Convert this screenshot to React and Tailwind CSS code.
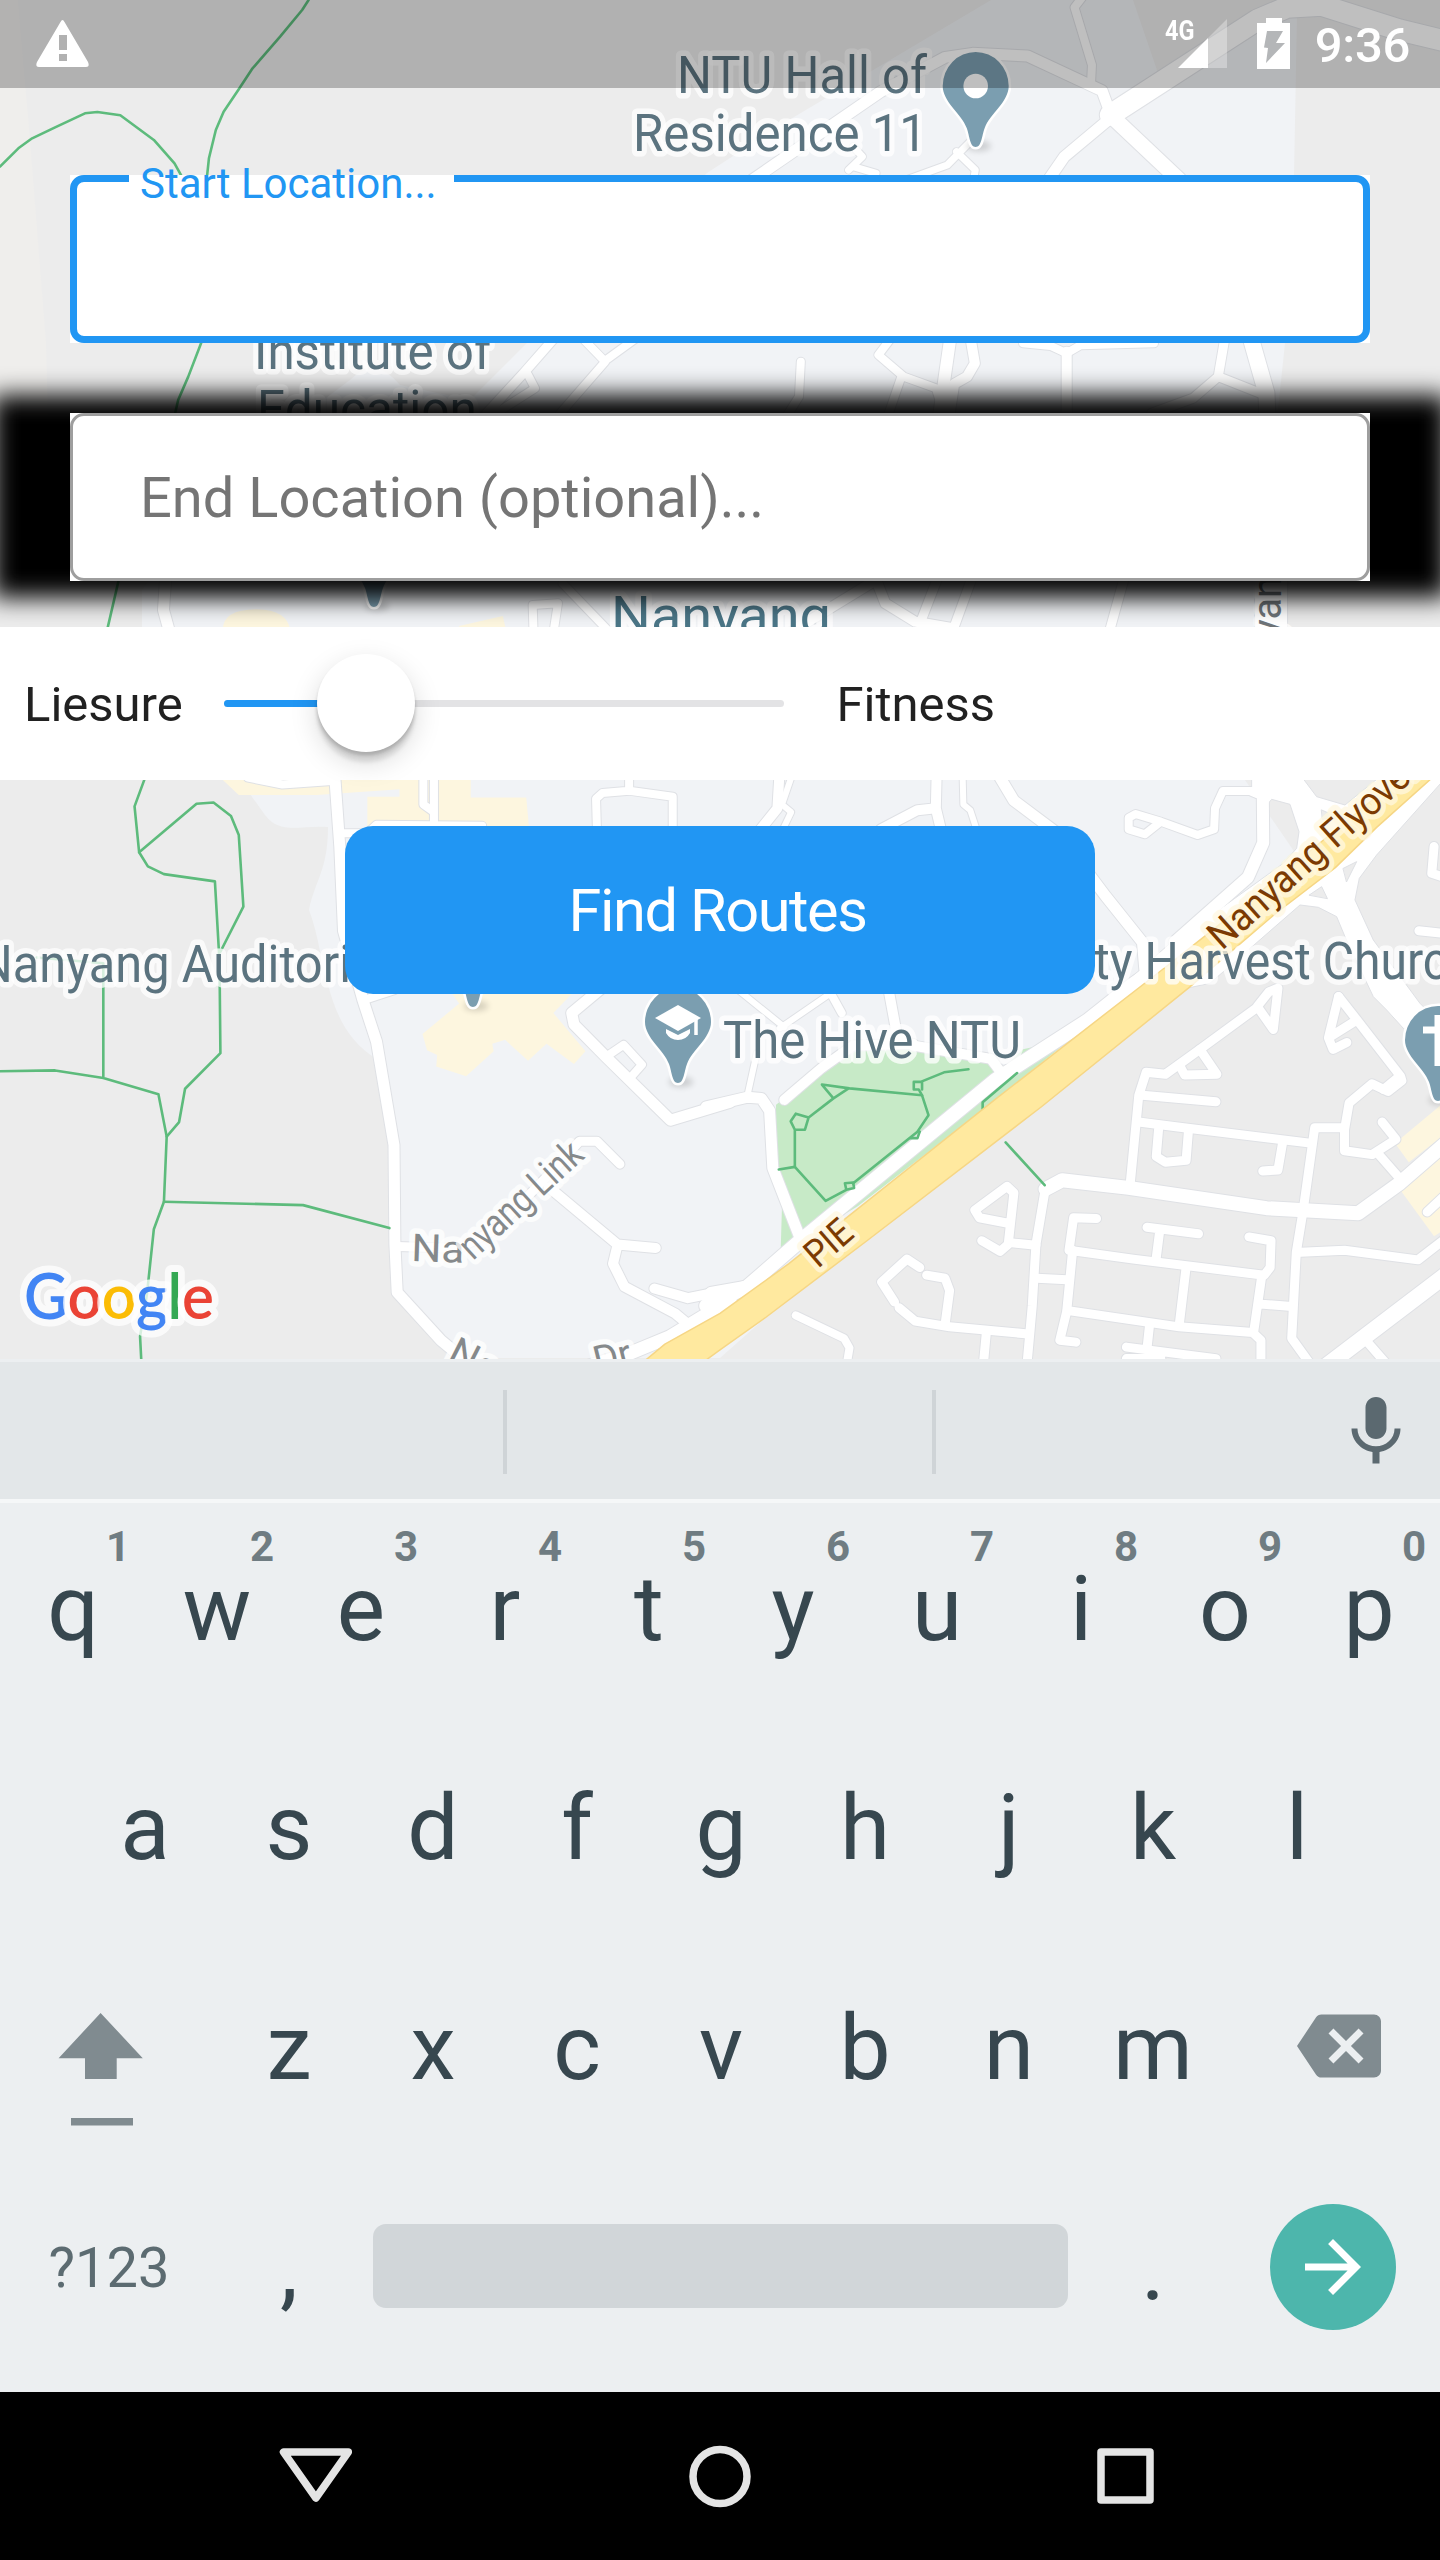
import React from "react";
import { MdMic, MdArrowForward } from "react-icons/md";

/* ---------- map data: each tile keeps its own local coordinate grid ---------- */

const TILES = [
  {
    matrix: "matrix(.4592 0 0 .3333 0 0)",
    fills: [],
    roads: [
      [9, "M1210 1010L1140 1120L1060 1240L1000 1340"],
      [8, "M1150 1125L1165 1165L1080 1240M1265 1010L1318 1085L1220 1240L1180 1340M1390 1010L1315 1085"],
    ],
    paths: [
      "M0 500L40 445L70 415L120 382L185 340L212 336L262 346L335 420L380 490L400 540",
      "M672 0L658 30L610 110L550 205L520 268L487 335L470 390L455 475L450 540",
      "M442 1015L410 1130L388 1200L378 1260L258 1743L235 1880L225 1940",
    ],
  },
  {
    matrix: "matrix(.4592 0 0 .3333 720 0)",
    fills: [],
    roads: [
      [8, "M790 -10L772 22L810 195L808 250"],
      [21, "M1600 130L1480 90L1310 16L1235 22L1170 60L850 345"],
      [15, "M850 345L1000 540"],
      [11, "M850 355L750 470L715 540M850 340L832 272L670 168L550 160L490 172L350 275L70 540"],
      [7, "M545 425L495 495L405 540M515 455L556 510L552 540M280 510L310 470L290 440M290 500L340 520"],
      [8, "M345 1065L400 1130L470 1165L478 1200M375 1010L345 1065M395 1130L360 1270"],
      [12, "M502 1010L478 1240"],
      [10, "M545 1010L555 1090L538 1130L510 1152L500 1240M755 1055L755 1250"],
      [8, "M176 1085L172 1190L140 1260M660 1030L720 1038L755 1060L785 1036L945 1030"],
      [9, "M1100 1010L1085 1130L1030 1195L940 1240M1085 1130L1195 1190"],
      [16, "M1155 1010L1190 1180L1192 1250"],
    ],
    paths: [],
  },
  {
    matrix: "matrix(.4592 0 0 .3333 0 370)",
    fills: ["M485 780Q485 718 560 718Q625 720 632 780Z", "M1000 780V768L1095 738L1102 780Z"],
    roads: [
      [11, "M362 600L356 720L372 800"],
      [8, "M1162 790L1160 705L1215 700L1205 790M1225 640L1330 790"],
    ],
    paths: [],
  },
  {
    matrix: "matrix(.4592 0 0 .3333 720 370)",
    fills: [],
    roads: [
      [9, "M555 600L505 790M475 620L440 745M885 600L845 800"],
      [10, "M150 790L340 630L360 700L425 755L510 775"],
      [32, "M1200 600L1200 800"],
    ],
    paths: [],
  },
  {
    matrix: "matrix(.4592 0 0 .3827 0 770)",
    fills: [
      "M480 20L520 65H690L870 50V70H800V150H1152L1146 72H1025V20Z",
      "M985 585L1000 610L920 690L930 732L952 745L950 775L1015 800L1075 735L1072 715L1100 705L1150 760L1190 715L1250 768L1275 735L1205 635L1245 585Z",
    ],
    roads: [
      [11, "M728 0L740 200L748 420L790 600L820 710L858 980L860 1240L865 1365L960 1490L1030 1560"],
      [8, "M740 165H800L820 143L1050 146M795 600L860 575M540 20L615 38L730 28"],
      [8, "M922 0V90L945 110V170M945 0V110"],
      [8, "M1300 160L1298 75L1312 60L1370 54L1465 70V160M1370 0V54"],
      [11, "M1310 570L1245 635L1250 665L1320 750L1460 915L1590 868"],
      [8, "M1325 745L1358 718L1398 770L1372 805"],
      [9, "M865 1245L1000 1250L1080 1200L1225 1020L1262 970H1300L1350 1030"],
      [10, "M1195 1090L1345 1240L1428 1249M1345 1240L1335 1290L1360 1350L1470 1420L1500 1450"],
      [10, "M1425 1355L1498 1380L1590 1358"],
      [13, "M1250 1570L1370 1525L1460 1480L1590 1385"],
    ],
    paths: [
      "M316 20L293 95L303 215L322 252L357 272L468 291L478 500L480 740L403 833L390 920L363 958L357 1128L335 1200L320 1370L305 1480L308 1550",
      "M303 215L428 88L465 85L503 120L520 170L530 357L480 475",
      "M0 787L120 785L225 805L345 847L363 958M225 805V505L80 490",
      "M357 1128L660 1137L848 1197",
    ],
  },
  {
    matrix: "matrix(.4592 0 0 .3827 720 770)",
    fills: ["M1580 865L1470 975L1500 1025L1580 950Z", "M1480 1095L1555 1218L1580 1200V1000Z"],
    roads: [
      [11, "M600 0L640 80L740 170L840 330L920 450L925 520"],
      [10, "M472 0L470 100L482 160M350 155L430 105L470 100M130 0L125 100L85 160"],
      [6, "M155 20L135 90L155 110L135 160M528 0L530 90L545 105L560 160"],
      [8, "M1170 55L1095 55L1078 100L1076 155L1040 170L960 135L905 115L890 125V155L925 168L960 135"],
      [10, "M365 560L385 690L420 720L590 755L615 795"],
      [6, "M40 575L140 672M130 675L245 580M80 740L58 860"],
      [8, "M235 570L265 635"],
      [10, "M140 862L220 780L290 720L420 715"],
      [11, "M-30 880L60 855L90 858L108 890L115 1040L175 1225M-20 1365L60 1348"],
      [12, "M1182 60L1183 190L1150 280L990 450"],
      [14, "M-30 1400L60 1350L170 1235L600 810L690 740L800 655L900 560L960 510"],
      [9, "M1195 580L1170 618L1205 678L1215 570L1195 580M1170 620L1045 730L970 795L928 790L912 850L893 1085"],
      [9, "M1045 730L1082 795L1012 797L1000 770M920 850L1080 867M912 920L1010 935L1285 975"],
      [9, "M955 940L950 1010L970 1025L1015 1020L1020 945M1225 975L1215 1045L1182 1048"],
      [9, "M1347 592L1385 650L1482 800L1485 812L1455 840L1420 820L1370 870L1360 940V995L1420 1005L1472 965L1442 920"],
      [9, "M1347 592L1325 700L1335 730L1365 712M1385 655L1325 700M1360 935L1295 935L1270 1150M1435 1005L1475 1060M1480 800L1445 835"],
      [14, "M709 1095L745 1072L890 1092L1190 1145L1390 1158L1480 1080L1590 965"],
      [9, "M709 1090L688 1240L680 1400L668 1560M1270 1150L1255 1260L1245 1485L1290 1560M1265 1260L1360 1255L1520 1280L1590 1215"],
      [16, "M1290 1585L1580 1320"],
      [9, "M1410 1495L1450 1550M820 1172L770 1170L760 1255L900 1278L1185 1320L1198 1300L1200 1230L1152 1220"],
      [9, "M768 1255L755 1415L740 1490L775 1495M755 1412L1000 1455L1160 1470L1178 1490V1560M1180 1320L1162 1470M1172 1395L1245 1402"],
      [9, "M1015 1300L1000 1450M930 1195L1042 1212M958 1200L950 1275M690 1328L755 1332M688 1242L632 1235L610 1258L570 1230"],
      [9, "M628 1235L640 1105L625 1088L555 1150L565 1170L630 1185M435 1300L407 1278L352 1338L380 1390M390 1405L425 1440L500 1455L665 1473"],
      [9, "M450 1320L490 1328L500 1360L490 1450M580 1470L573 1560M935 1455L930 1510M885 1508L1080 1538M885 1538H960"],
      [9, "M1555 200L1550 270L1600 290M1522 420L1600 430M1540 1155L1580 1110"],
      [8, "M165 1425L270 1485L282 1510L275 1560"],
    ],
    paths: [],
  },
];

/* interchange around the flyover, holes cut with the even-odd rule */
const INTERCHANGE = [
  "M445 75L455 62V20H605L650 80L735 105L840 20H1000L520 420L260 655L0 780V705L210 520L370 410L550 280L590 235L597 185L570 103L515 88L505 100ZM665 120L710 140L668 148Z",
  "M1040 20L830 255L778 325L765 390L820 510L960 700L1040 780V860L910 775L860 720L820 680L735 500L710 440L655 412L600 405L330 640L260 655L430 500L690 290L960 20ZM730 295L770 275L740 335ZM628 375L665 350L682 385Z",
];

const PARK_PATHS = [
  "M128 1044L163 1037L230 1126L275 1097L272 1080L290 1078L292 1092L275 1097",
  "M290 1080L430 945L454 902L440 850L282 832L222 822L247 858L280 832M247 858L193 908L185 940H163L154 918L165 898L193 908M163 940V1037",
  "M440 850L433 835H422V815H440V835M437 815L488 790L541 782M572 886V868L647 792M622 973L707 1085M415 962H430L435 945",
];

const PIN = "M0 61C-6 61-6 50-9 42C-14 28-33 16-33 0A33 34 0 0 1 33 0C33 16 14 28 9 42C6 50 6 61 0 61Z";

function Pin({ x, y, children }) {
  return (
    <g transform={`translate(${x} ${y})`}>
      <ellipse className="blur-[3px]" cx="3" cy="60" rx="12" ry="5" fill="#000" opacity=".16" />
      <path d={PIN} fill="#7b9eb0" stroke="#fff" strokeWidth="5" paintOrder="stroke" />
      {children}
    </g>
  );
}

function Label({ x, y, w, size = 51, rotate = 0, fill = "#5b737f", halo = "#fff", children }) {
  return (
    <text
      transform={`translate(${x} ${y}) rotate(${rotate})`}
      fontSize={size}
      textLength={w}
      lengthAdjust="spacingAndGlyphs"
      fill={fill}
      stroke={halo}
      strokeOpacity=".75"
      strokeWidth="11"
      strokeLinejoin="round"
      paintOrder="stroke"
    >
      {children}
    </text>
  );
}

function MapCanvas() {
  return (
    <svg className="absolute inset-0 font-[Roboto,sans-serif]" width="1440" height="1359" viewBox="0 0 1440 1359">
      <rect width="1440" height="1359" fill="#ececec" />
      <path d="M0 0H18L30 140L46 343L48 420H0Z" fill="#efeeec" />
      {/* campus ground */}
      <path
        d="M991 0H1133L1158 73L1240 20L1297 15L1294 175L1285 343L1258 600L1245 780L1300 860L1090 1030L720 1358H450L395 1290L394 1140L378 1060C345 1040 335 1010 328 985C320 960 320 940 309 910C315 880 328 870 328 827C300 825 280 835 265 815L240 780L142 640V590L230 470L350 380Q375 355 400 385L470 400L530 340L707 173L784 123Z"
        fill="#f1f3f6"
      />
      <path
        transform="matrix(.4592 0 0 .3827 720 770)"
        d="M122 875L230 775L330 715L560 745L590 760L603 795L660 730L755 705V712L560 900L300 1140L132 1260L135 1140L122 1040Z"
        fill="#c7eac7"
      />
      <g strokeLinejoin="round" strokeLinecap="round" fill="none">
        {TILES.map((t) => (
          <g key={t.matrix} transform={t.matrix}>
            {t.fills.map((d) => (
              <path key={d} d={d} fill="#fdf6df" />
            ))}
            {t.roads.map(([w, d]) => (
              <path key={d} d={d} stroke="#dfe1e5" strokeWidth={w + 2} vectorEffect="non-scaling-stroke" />
            ))}
          </g>
        ))}
        <g transform="matrix(.3333 0 0 .3333 1100 770)">
          {INTERCHANGE.map((d) => (
            <path key={d} d={d} fill="#fff" fillRule="evenodd" stroke="#dfe1e5" vectorEffect="non-scaling-stroke" />
          ))}
        </g>
        {TILES.map((t) => (
          <g key={t.matrix} transform={t.matrix}>
            {t.roads.map(([w, d]) => (
              <path key={d} d={d} stroke="#fff" strokeWidth={w} vectorEffect="non-scaling-stroke" />
            ))}
          </g>
        ))}
        {TILES.map((t) => (
          <g key={t.matrix} transform={t.matrix}>
            {t.paths.map((d) => (
              <path key={d} d={d} stroke="#5dbb7c" strokeWidth="2.6" vectorEffect="non-scaling-stroke" />
            ))}
          </g>
        ))}
        <g transform="matrix(.4592 0 0 .3827 720 770)">
          {PARK_PATHS.map((d) => (
            <path key={d} d={d} stroke="#5dbb7c" strokeWidth="2.6" vectorEffect="non-scaling-stroke" />
          ))}
          <path
            d="M-220 1600L-120 1500L0 1420L150 1290L600 860L965 520L1060 430L1180 315L1500 0H1570L1430 150L1340 255L1210 375L1020 570L700 880L320 1230L100 1430L0 1515L-60 1568Z"
            fill="#ffe99f"
            stroke="#f6d685"
            strokeWidth="1.5"
            vectorEffect="non-scaling-stroke"
          />
        </g>
      </g>

      <Label x={677} y={93.3} w={250} size={52.5}>NTU Hall of</Label>
      <Label x={633} y={151.3} w={294} size={52.5}>Residence 11</Label>
      <Label x={254} y={368.7} w={237} size={52.5}>Institute of</Label>
      <Label x={257} y={427} w={220} size={52.5}>Education</Label>
      <Label x={611} y={634} w={220} size={54} fill="#4b7687">Nanyang</Label>
      <Label x={-22} y={981.6} w={373}>Nanyang Auditori</Label>
      <Label x={1094} y={978.6} w={354}>ty Harvest Churc</Label>
      <Label x={723} y={1057.8} w={298}>The Hive NTU</Label>
      <Label x={1281} y={638} w={84} size={40} rotate={-90} fill="#6e7478">yang</Label>
      <Label x={411} y={1261} w={53} size={38.5} rotate={2} fill="#85898b">Na</Label>
      <Label x={473} y={1261} w={153} size={38.5} rotate={-42.6} fill="#85898b">nyang Link</Label>
      <Label x={446} y={1360} w={50} size={38.5} rotate={27} fill="#85898b">Na</Label>
      <Label x={597} y={1374} w={38} size={38.5} rotate={-14} fill="#85898b">Dr</Label>
      <Label x={818} y={1269} w={50} size={38} rotate={-41} fill="#7b3a02" halo="#fff8e1">PIE</Label>
      <Label x={1222} y={951} w={268} size={39} rotate={-41.8} fill="#7b3a02" halo="#fff8e1">Nanyang Flyover</Label>

      <Pin x={975.7} y={86}>
        <circle r="12.3" fill="#fff" />
      </Pin>
      <Pin x={374} y={546} />
      <Pin x={473} y={946} />
      <Pin x={678} y={1022}>
        <path d="M0-17L23-4L0 9L-23-4Z" fill="#fff" />
        <path d="M-12 7L0 13L12 7V11Q8 18 0 18Q-8 18-12 11Z" fill="#fff" />
        <path d="M18-5V13" stroke="#fff" strokeWidth="3.5" />
      </Pin>
      <Pin x={1438} y={1040}>
        <path d="M-15-10H15M0-25V26" stroke="#fff" strokeWidth="7" />
      </Pin>

      <text
        x="24"
        y="1318.500"
        textLength="190"
        lengthAdjust="spacingAndGlyphs"
        fontSize="63"
        className="font-[Lato,sans-serif] font-semibold"
        stroke="#fff"
        strokeOpacity=".75"
        strokeWidth="14"
        strokeLinejoin="round"
        paintOrder="stroke"
      >
        <tspan fill="#4285f4">G</tspan>
        <tspan fill="#ea4335">o</tspan>
        <tspan fill="#fbbc05">o</tspan>
        <tspan fill="#4285f4">g</tspan>
        <tspan fill="#34a853">l</tspan>
        <tspan fill="#ea4335">e</tspan>
      </text>
    </svg>
  );
}

/* ---------- app chrome ---------- */

function StatusBar() {
  return (
    <div className="flex h-[88px] items-start bg-black/25 pl-9 pr-[30px] text-white">
      <svg className="mt-[19px]" width="53" height="48" viewBox="0 0 53 48" fill="#fff">
        <path
          fillRule="evenodd"
          d="M26.500 1Q27.500 1 28.500 3L52 43Q54 48 50 48H3Q-1 48 1 43L24.500 3Q25.500 1 26.500 1ZM23 16V31H31V16ZM23 35V42H31V35Z"
        />
      </svg>
      <div className="ml-auto flex items-start">
        <span className="mt-[17px] w-[13px] origin-top-left scale-x-[.84] text-[28px] font-bold leading-7">4G</span>
        <svg className="mt-[19px]" width="49" height="49" viewBox="0 0 49 49">
          <path d="M0 49H30V19Z" fill="#fff" />
          <path d="M30 49H49V0L30 19Z" fill="#fff" opacity=".32" />
        </svg>
        <svg className="ml-[30px] mt-[18px]" width="33" height="51" viewBox="0 0 33 51">
          <path
            fill="#fff"
            fillRule="evenodd"
            d="M9 0H25V5H33V51H0V5H9ZM10 13L7 29.500L11 30L9 45L28 25H19L26 13Z"
          />
        </svg>
        <span className="ml-[25px] mt-[17px] text-[49px] font-medium leading-[58px] tracking-[-0.3px]">9:36</span>
      </div>
    </div>
  );
}

function RouteForm() {
  return (
    <div className="flex flex-col">
      <div className="mx-[70px] mt-[87px] h-[168px] bg-white">
        <div className="relative h-full rounded-[14px] border-[7px] border-[#2196f3]">
          <div className="absolute -top-[7px] left-[52px] h-[7px] w-[325px] bg-white" />
          <span className="absolute -top-[23px] left-[63px] whitespace-nowrap text-[42px] leading-[49px] text-[#2196f3]">
            Start Location...
          </span>
        </div>
      </div>
      <div className="relative mx-[70px] mt-[70px] h-[168px]">
        <div className="absolute -inset-x-[78px] -bottom-[17px] -top-[18px] bg-black blur-[12px]" />
        <div className="relative h-full bg-white">
          <div className="flex h-full items-center rounded-[14px] border-[3.5px] border-[#9e9e9e] pl-[67px] pt-[2px] text-[56px] leading-none text-[#757575]">
            End Location (optional)...
          </div>
        </div>
      </div>
      <div className="relative mt-[46px] flex h-[153px] items-center bg-white text-[49px] leading-none text-[#212121]">
        <span className="w-[224px] pl-6 pt-[2px]">Liesure</span>
        <div className="relative flex h-[7px] w-[560px] rounded-full bg-[#e3e3e5]">
          <div className="h-full w-[142px] rounded-full bg-[#2196f3]" />
          <div className="absolute -top-[46px] left-[92.5px] size-[98px] rounded-full bg-white shadow-[0_10px_28px_rgba(0,0,0,.15),0_3.5px_3.5px_rgba(0,0,0,.16),0_10px_4px_rgba(0,0,0,.1)]" />
        </div>
        <span className="pl-[52.5px] pt-[2px]">Fitness</span>
      </div>
      <button className="relative mx-auto mt-[46px] h-[168px] w-[750px] rounded-[28px] bg-[#2196f3] pr-[5px] pt-[3px] text-[59.5px] leading-none tracking-[-1.43px] text-white">
        Find Routes
      </button>
    </div>
  );
}

function Key({ label, hint }) {
  return (
    <div className="relative flex w-36 items-center justify-center pl-[2px]">
      {label}
      {hint && (
        <span className="absolute left-[98px] top-[23px] w-10 text-center text-[42px] font-bold leading-none text-[#6f7c82]">
          {hint}
        </span>
      )}
    </div>
  );
}

function Keyboard() {
  return (
    <div className="flex h-[1033px] flex-col bg-[#eceff1] text-[91px] leading-none text-[#37474f]">
      <div className="mt-[3px] flex h-[137px] items-center bg-[#e3e7e9]">
        <div className="mb-[-3px] ml-[503px] h-[84px] w-1 bg-[#cfd4d7]" />
        <div className="mb-[-3px] ml-[425px] h-[84px] w-1 bg-[#cfd4d7]" />
        <MdMic className="ml-[398px] mt-[3px] size-[84px] text-[#5b6970]" />
      </div>
      <div className="h-1 bg-[#f5f7f8]" />
      <div className="flex h-[215px] pb-[3px]">
        {"qwertyuiop".split("").map((k, i) => (
          <Key key={k} label={k} hint={String((i + 1) % 10)} />
        ))}
      </div>
      <div className="flex h-[220px] justify-center">
        {"asdfghjkl".split("").map((k) => (
          <Key key={k} label={k} />
        ))}
      </div>
      <div className="flex h-[220px]">
        <svg className="w-[216px]" height="220" viewBox="0 0 216 220" fill="#808b90">
          <path d="M100.600 75L142.800 120.200H116.700V141H85V120.200H58.600Z" />
          <rect x="71" y="180" width="62" height="7.500" />
        </svg>
        {"zxcvbnm".split("").map((k) => (
          <Key key={k} label={k} />
        ))}
        <svg className="ml-[73px] mt-[66px]" width="84" height="84" viewBox="0 0 24 24" fill="#808b90">
          <path d="M22 3H7c-.69 0-1.230.350-1.590.880L0 12l5.410 8.110c.360.530.900.890 1.590.890h15c1.100 0 2-.900 2-2V5c0-1.100-.900-2-2-2zm-3 12.590L17.590 17 14 13.410 10.410 17 9 15.590 12.590 12 9 8.410 10.410 7 14 10.590 17.590 7 19 8.410 15.410 12 19 15.590z" />
        </svg>
      </div>
      <div className="flex h-[220px] items-center">
        <span className="w-[216px] pl-[2px] text-center text-[56px] text-[#5c6b71]">?123</span>
        <Key label="," />
        <div className="mx-[12.5px] mb-1 h-[84px] w-[695px] rounded-[13px] bg-[#d1d6d9]" />
        <Key label="." />
        <div className="mb-[3px] ml-[45.5px] flex size-[126px] items-center justify-center rounded-full bg-[#4db6ac]">
          <MdArrowForward className="size-[84px] text-white" />
        </div>
      </div>
    </div>
  );
}

function NavBar() {
  return (
    <div className="flex h-[168px] items-center bg-black">
      <svg width="1440" height="168" viewBox="0 0 1440 168" fill="none" stroke="#e4e4e4" strokeWidth="7.500" strokeLinejoin="round">
        <path d="M283.500 60H348.300L315.900 106Z" />
        <circle cx="720" cy="84.500" r="27" />
        <rect x="1101" y="60" width="49" height="48" />
      </svg>
    </div>
  );
}

export default function App() {
  return (
    <div className="h-[2560px] w-[1440px] overflow-hidden font-[Roboto,sans-serif]">
      <div className="relative h-[1359px] overflow-hidden">
        <MapCanvas />
        <div className="relative">
          <StatusBar />
          <RouteForm />
        </div>
      </div>
      <Keyboard />
      <NavBar />
    </div>
  );
}
